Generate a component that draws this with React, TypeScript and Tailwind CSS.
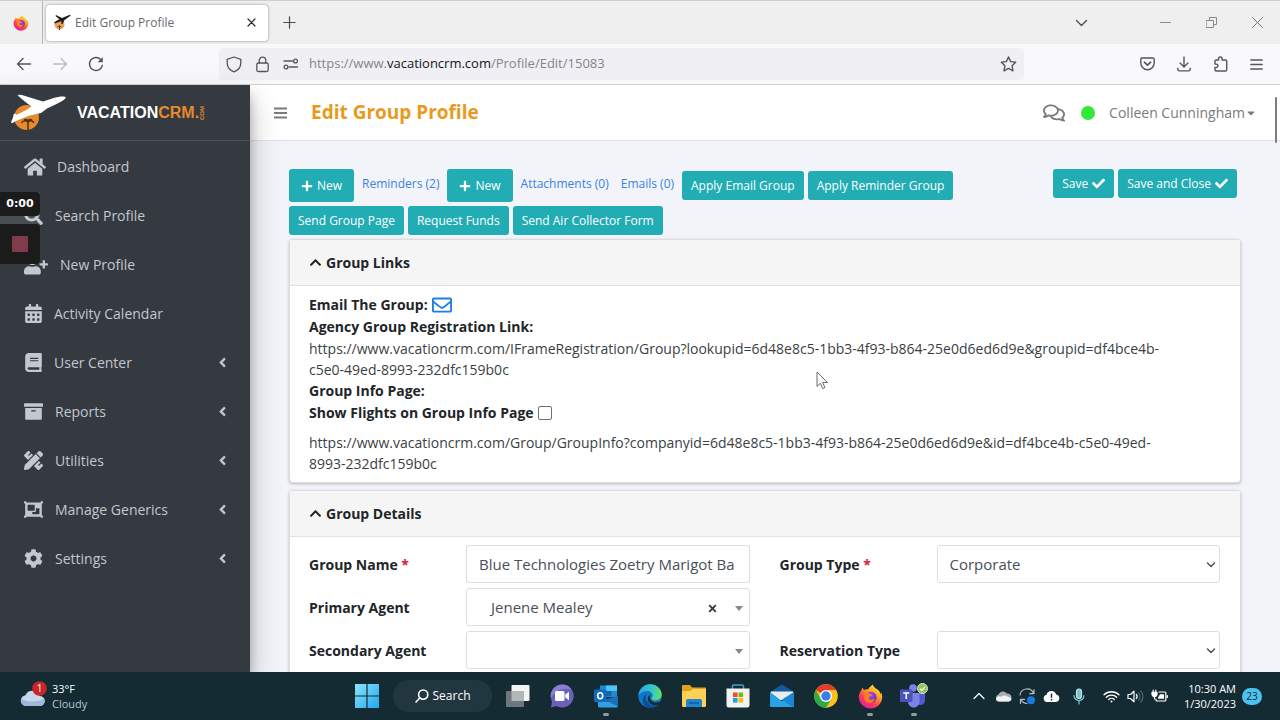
import type { ReactNode } from "react";
import {
  FaAngleLeft,
  FaArchive,
  FaBook,
  FaCalendarAlt,
  FaCaretDown,
  FaCheck,
  FaChevronUp,
  FaCog,
  FaHome,
  FaObjectGroup,
  FaPencilRuler,
  FaPlus,
  FaRegComments,
  FaRegEnvelope,
  FaSearch,
  FaUserPlus,
} from "react-icons/fa";

const line = {
  fill: "none",
  stroke: "currentColor",
  strokeLinecap: "round",
  strokeLinejoin: "round",
} as const;

/* ---------- shared drawings ---------- */

function FirefoxLogo({ size, id }: { size: number; id: string }) {
  return (
    <svg width={size} height={size} viewBox="0 0 24 24" aria-hidden="true">
      <defs>
        <linearGradient id={`${id}-body`} x1="0.8" y1="0.1" x2="0.25" y2="0.95">
          <stop offset="0" stopColor="#ffe23a" />
          <stop offset="0.35" stopColor="#ff9a1f" />
          <stop offset="0.65" stopColor="#ff4052" />
          <stop offset="1" stopColor="#e0209c" />
        </linearGradient>
        <radialGradient id={`${id}-globe`} cx="0.5" cy="0.3" r="0.7">
          <stop offset="0" stopColor="#a54cf0" />
          <stop offset="1" stopColor="#5b2bb8" />
        </radialGradient>
      </defs>
      <path
        d="M3.2 6.2C3.4 4.9 4 3.9 4.6 3.3c.1 1 .5 1.800 1.200 2.500C7 5.200 8.300 5 9.500 5.200 11 2.900 13 1.800 14 .5c.6 1.500 1.600 2.700 3 3.900 2 .3 4 3 4.700 5.100.3-.3.400-.8.400-1.300C23 10 23.300 11.500 23.200 13.200 22.700 19 18 23.500 12 23.500S1 18.800.8 12.700C.7 10.200 1.700 7.700 3.200 6.200Z"
        fill={`url(#${id}-body)`}
      />
      <circle cx="12.400" cy="12.800" r="5.400" fill={`url(#${id}-globe)`} />
      <path
        d="M5.500 8.600c2.600-1 4.800-.5 6.500 1 .9.100 1.600.500 1.800 1.100-.9.800-2.400.9-3.200 1.900-.4 1.500.8 2.500 2.300 2.500 1.600 0 2.800-1 3.200-1.100-.4 2.900-2.700 4.500-5.200 4.300-3.500-.3-5.900-3.200-5.400-9.700Z"
        fill="#ff7a26"
      />
    </svg>
  );
}

function PlaneLogo() {
  return (
    <svg width="56" height="37" viewBox="0 0 56 37" aria-hidden="true">
      <circle cx="15.500" cy="23.500" r="12.500" fill="#e8892b" />
      <path
        d="M17 36V28M10.500 29c1.500-2.600 4.500-2.800 6.500-.8 1.500-2 4.500-1.800 6 .6M13 26.500c1.200-1.500 3-1.200 4 .5 1-1.700 2.800-2 4-.5"
        fill="none"
        stroke="#4a3320"
        strokeWidth="1.500"
      />
      <path
        d="M6.500 1.200c2-.6 4-.4 6 .2L32 7.500 42 4.300C46 3 50 2.400 52.500 2.600c2 .1 2.600.9 2 1.700C53 6.300 49 8.500 45 10.300l-9 4.200-6 4.500c-4 1.200-9 1.500-14 3.500C11 24.500 6 26 1.500 29c-.8.200-1.500-.4-1.300-1.200L2 23.500l.6-3.300c1.200-.8 2.200 0 2.600.8C10.500 18.500 16.500 15.500 20.500 12.500 16 9 11 5.500 6.500 1.200Z"
        fill="#ffffff"
      />
    </svg>
  );
}

/* ---------- browser chrome ---------- */

function TabStrip() {
  return (
    <div className="flex h-[44px] shrink-0 items-center border-t border-[#cfcfd0] bg-[#efeff0] text-[#4a4a4f]">
      <div className="flex h-full w-[43px] items-center justify-center border-r border-[#b5b5b7]">
        <FirefoxLogo size={16} id="fx-tab" />
      </div>
      <div className="ml-[3px] flex h-[36px] w-[222px] items-center rounded bg-white pl-2 pr-3 shadow-[0_0_3px_rgba(0,0,0,0.4)]">
        <svg width="17" height="17" viewBox="0 0 17 17" aria-hidden="true">
          <circle cx="5.500" cy="10.500" r="5" fill="#e9a15a" />
          <path d="M2 1l6 3 8-3.200c1 .2.600 1-.2 1.500L10.500 6 8.500 10H7.500l-.2-3L1 9.500 0 8.500l5.500-3.300L1.500 2Z" fill="#1b1b1b" />
          <path d="M5.500 16v-4M3.500 13l2-1.200L7.500 13" fill="none" stroke="#5b3a1a" />
        </svg>
        <span className="ml-1 flex-1 text-[12px] text-[#68686d]">Edit Group Profile</span>
        <button type="button" aria-label="Close tab" className="text-[#2b2a33]">
          <svg width="9" height="9" viewBox="0 0 9 9" {...line} strokeWidth="1.200">
            <path d="M1 1l7 7M8 1L1 8" />
          </svg>
        </button>
      </div>
      <button type="button" aria-label="New tab" className="ml-[15px]">
        <svg width="13" height="13" viewBox="0 0 13 13" {...line} strokeWidth="1.200">
          <path d="M6.500 .8v11.400M.8 6.500h11.400" />
        </svg>
      </button>
      <div className="ml-auto flex items-center pr-[17px]">
        <button type="button" aria-label="List all tabs" className="mr-[72px]">
          <svg width="13" height="8" viewBox="0 0 13 8" {...line} strokeWidth="1.300">
            <path d="M1.500 1.500l5 5 5-5" />
          </svg>
        </button>
        <button type="button" aria-label="Minimize" className="mr-[35px] text-[#8a8a8e]">
          <svg width="11" height="11" viewBox="0 0 11 11" {...line}>
            <path d="M.5 5.500h10" />
          </svg>
        </button>
        <button type="button" aria-label="Restore" className="mr-[35px] text-[#88888c]">
          <svg width="11" height="11" viewBox="0 0 11 11" {...line}>
            <path d="M.5 3.500h7v7h-7zM3.500 3.500v-3h7v7h-3" />
          </svg>
        </button>
        <button type="button" aria-label="Close" className="text-[#77777b]">
          <svg width="11" height="11" viewBox="0 0 11 11" {...line}>
            <path d="M.5 .5l10 10M10.500 .5l-10 10" />
          </svg>
        </button>
      </div>
    </div>
  );
}

function AddressBar() {
  return (
    <div className="flex h-[41px] shrink-0 items-center border-b border-[#d4d4d8] bg-[#f9f9fb] text-[#55555b]">
      <button type="button" aria-label="Back" className="ml-4">
        <svg width="16" height="14" viewBox="0 0 16 14" {...line} strokeWidth="1.400">
          <path d="M14.500 7H1.500M7 1.500L1.500 7 7 12.500" />
        </svg>
      </button>
      <button type="button" aria-label="Forward" className="ml-5 text-[#bcbcc0]">
        <svg width="16" height="14" viewBox="0 0 16 14" {...line} strokeWidth="1.400">
          <path d="M1.500 7h13M9 1.500L14.500 7 9 12.500" />
        </svg>
      </button>
      <button type="button" aria-label="Reload" className="ml-5">
        <svg width="16" height="16" viewBox="0 0 16 16" {...line} strokeWidth="1.400">
          <path d="M14.300 9.500A6.500 6.500 0 1 1 12.600 3.400" />
          <path d="M14.800 1v5.200H9.600Z" fill="currentColor" stroke="none" />
        </svg>
      </button>
      <div className="ml-[115px] mr-[116px] flex h-[32px] min-w-0 flex-1 items-center rounded bg-[#f0f0f4] px-[7px]">
        <svg width="16" height="17" viewBox="0 0 16 17" {...line} strokeWidth="1.300">
          <path d="M8 1l6.800 2.300v3.500c0 4-2.300 7.500-6.800 9-4.500-1.500-6.800-5-6.800-9V3.300Z" />
        </svg>
        <svg className="ml-[14px]" width="13" height="17" viewBox="0 0 13 17" {...line} strokeWidth="1.300">
          <rect x=".8" y="7" width="11.400" height="8.500" rx="1.500" />
          <path d="M3.200 7V4.500a3.300 3.300 0 0 1 6.600 0V7" />
        </svg>
        <svg className="ml-[14px]" width="16" height="12" viewBox="0 0 16 12" {...line} strokeWidth="1.300">
          <path d="M1 3h8.500M6 9h8.500" />
          <circle cx="12.500" cy="3" r="1.900" />
          <circle cx="3" cy="9" r="1.900" />
        </svg>
        <div role="textbox" aria-label="Address" className="ml-[10px] flex-1 truncate text-[13px] text-[#85858a]">
          https://www.<span className="text-[#15141a]">vacationcrm.com</span>/Profile/Edit/15083
        </div>
        <button type="button" aria-label="Bookmark this page">
          <svg width="17" height="16" viewBox="0 0 17 16" {...line} strokeWidth="1.400">
            <path d="M8.500 1l2.200 4.600 5 .7-3.600 3.500.9 5-4.500-2.400L4 14.800l.9-5L1.300 6.300l5-.7Z" />
          </svg>
        </button>
      </div>
      <div className="flex items-center gap-[22px] pr-[17px]">
        <svg width="15" height="14" viewBox="0 0 15 14" {...line} strokeWidth="1.400">
          <path d="M2 1h11a1.200 1.200 0 0 1 1.200 1.200V6a6.700 6.700 0 0 1-13.400 0V2.200A1.200 1.200 0 0 1 2 1Z" />
          <path d="M4.300 5.200l3.200 3 3.200-3" strokeWidth="1.600" />
        </svg>
        <svg width="14" height="16" viewBox="0 0 14 16" {...line} strokeWidth="1.400">
          <path d="M7 1v10M3 7l4 4 4-4M.8 12.200v1c0 1 .7 1.700 1.700 1.700h9c1 0 1.700-.7 1.700-1.700v-1" />
        </svg>
        <svg width="15" height="16" viewBox="0 0 15 16" {...line} strokeWidth="1.400">
          <path d="M5.500 4V2.800a1.800 1.800 0 0 1 3.600 0V4h3.400c.7 0 1.200.5 1.200 1.200v8.600c0 .7-.5 1.200-1.200 1.200H3.200c-.7 0-1.200-.5-1.200-1.200v-2.300h1.200a1.700 1.700 0 0 0 0-3.400H2V5.200C2 4.500 2.500 4 3.200 4Z" />
        </svg>
        <svg width="13" height="11" viewBox="0 0 13 11" {...line} strokeWidth="1.400">
          <path d="M.8 1h11.400M.8 5.500h11.400M.8 10h11.400" />
        </svg>
      </div>
    </div>
  );
}

/* ---------- application ---------- */

const navItems = [
  { label: "Dashboard", icon: <FaHome size={22} />, gap: "gap-[11px]", expands: false },
  { label: "Search Profile", icon: <FaSearch size={19} />, gap: "gap-3", expands: false },
  { label: "New Profile", icon: <FaUserPlus size={24} />, gap: "gap-3", expands: false },
  { label: "Activity Calendar", icon: <FaCalendarAlt size={19} />, gap: "gap-[11px]", expands: false },
  { label: "User Center", icon: <FaBook size={19} />, gap: "gap-[11px]", expands: true },
  { label: "Reports", icon: <FaArchive size={19} />, gap: "gap-3", expands: true },
  { label: "Utilities", icon: <FaPencilRuler size={19} />, gap: "gap-3", expands: true },
  { label: "Manage Generics", icon: <FaObjectGroup size={19} />, gap: "gap-3", expands: true },
  { label: "Settings", icon: <FaCog size={19} />, gap: "gap-3", expands: true },
];

function Sidebar() {
  return (
    <aside className="z-10 flex w-[250px] shrink-0 flex-col bg-[#343a40] shadow-[0_14px_28px_rgba(0,0,0,0.25),0_10px_10px_rgba(0,0,0,0.22)]">
      <a href="#home" className="flex h-[56px] shrink-0 items-center border-b border-[#4b545c] pl-[11px]">
        <PlaneLogo />
        <span className="ml-[10px] flex items-center font-['Liberation_Sans',sans-serif] text-[16px] font-bold text-white">
          VACATION<span className="text-[#e8892b]">CRM.</span>
          <span className="rotate-180 text-[6px] leading-[6px] text-[#e8892b] [writing-mode:vertical-rl]">COM</span>
        </span>
      </a>
      <nav className="flex flex-col pt-px">
        {navItems.map((item) => (
          <a
            key={item.label}
            href="#nav"
            className={`flex h-[49px] items-center pl-6 pr-5 text-[14px] text-[#c2c7d0] ${item.gap}`}
          >
            {item.icon}
            <span className="flex-1">{item.label}</span>
            {item.expands && <FaAngleLeft size={15} />}
          </a>
        ))}
      </nav>
    </aside>
  );
}

function TopBar() {
  return (
    <header className="flex h-[56px] shrink-0 items-center border-b border-[#dee2e6] bg-white pl-6 pr-[23px] text-[#7b7b7b]">
      <button type="button" aria-label="Toggle menu">
        <svg width="13" height="12" viewBox="0 0 13 12" {...line} strokeLinecap="butt" strokeWidth="1.800">
          <path d="M0 1.500h13M0 6h13M0 10.500h13" />
        </svg>
      </button>
      <h1 className="ml-6 text-[19px] font-bold text-[#e99a1c]">Edit Group Profile</h1>
      <div className="ml-auto flex items-center">
        <FaRegComments size={22} />
        <span className="ml-4 h-[14px] w-[14px] rounded-full bg-[#35e835]" />
        <button type="button" className="ml-[14px] flex items-center text-[14px]">
          Colleen Cunningham
          <FaCaretDown size={12} />
        </button>
      </div>
    </header>
  );
}

function ActionButton({ children, tall }: { children: ReactNode; tall?: boolean }) {
  return (
    <button
      type="button"
      className={`flex items-center gap-1 whitespace-nowrap rounded-[3px] bg-[#22adb5] text-[12px] text-white ${
        tall ? "h-[33px] px-3" : "h-[29px] px-[9px]"
      }`}
    >
      {children}
    </button>
  );
}

function Toolbar() {
  return (
    <div className="flex items-start justify-between pr-1">
      <div className="flex flex-col gap-1">
        <div className="flex items-center text-[12px] text-[#3b82e0]">
          <ActionButton tall>
            <FaPlus size={12} /> New
          </ActionButton>
          <a href="#reminders" className="mx-2 pb-1">
            Reminders (2)
          </a>
          <ActionButton tall>
            <FaPlus size={12} /> New
          </ActionButton>
          <a href="#attachments" className="ml-2 mr-3 pb-1">
            Attachments (0)
          </a>
          <a href="#emails" className="mr-2 pb-1">
            Emails (0)
          </a>
          <div className="flex gap-1">
            <ActionButton>Apply Email Group</ActionButton>
            <ActionButton>Apply Reminder Group</ActionButton>
          </div>
        </div>
        <div className="flex gap-1">
          <ActionButton>Send Group Page</ActionButton>
          <ActionButton>Request Funds</ActionButton>
          <ActionButton>Send Air Collector Form</ActionButton>
        </div>
      </div>
      <div className="flex gap-1">
        <ActionButton>
          Save <FaCheck size={13} />
        </ActionButton>
        <ActionButton>
          Save and Close <FaCheck size={13} />
        </ActionButton>
      </div>
    </div>
  );
}

function Card({ title, children }: { title: string; children: ReactNode }) {
  return (
    <section className="rounded border border-[#dcdde0] bg-white shadow-[0_1px_3px_rgba(0,0,0,0.25)]">
      <h2 className="border-b border-[#e2e2e4] bg-[#f5f5f5]">
        <button type="button" className="flex h-[45px] w-full items-center gap-1 px-[19px] text-[14px] font-bold">
          <FaChevronUp size={13} />
          {title}
        </button>
      </h2>
      {children}
    </section>
  );
}

function GroupLinks() {
  return (
    <Card title="Group Links">
      <div className="px-[19px] py-2 text-[14px] leading-[22px]">
        <p className="flex items-center gap-1 font-bold">
          Email The Group:
          <a href="#email" aria-label="Email the group" className="text-[#1f7fe0]">
            <FaRegEnvelope size={20} />
          </a>
        </p>
        <p className="font-bold">Agency Group Registration Link:</p>
        <p className="max-w-[860px] leading-[21px] text-[#3a3f44]">
          https://www.vacationcrm.com/IFrameRegistration/Group?lookupid=6d48e8c5-1bb3-4f93-b864-25e0d6ed6d9e&amp;groupid=df4bce4b-c5e0-49ed-8993-232dfc159b0c
        </p>
        <p className="font-bold">Group Info Page:</p>
        <p className="mb-2 flex items-center gap-1 font-bold">
          <label htmlFor="show-flights">Show Flights on Group Info Page</label>
          <input
            id="show-flights"
            type="checkbox"
            className="h-[14px] w-[14px] appearance-none rounded-[2px] border border-[#6f6f76] bg-white"
          />
        </p>
        <p className="max-w-[860px] leading-[21px] text-[#3a3f44]">
          https://www.vacationcrm.com/Group/GroupInfo?companyid=6d48e8c5-1bb3-4f93-b864-25e0d6ed6d9e&amp;id=df4bce4b-c5e0-49ed-8993-232dfc159b0c
        </p>
      </div>
    </Card>
  );
}

function Field({
  id,
  label,
  required,
  children,
}: {
  id: string;
  label: string;
  required?: boolean;
  children: ReactNode;
}) {
  return (
    <div className="grid grid-cols-[157px_1fr] items-center">
      <label htmlFor={id} className="text-[14px] font-bold">
        {label} {required && <span className="text-[#d9153a]">*</span>}
      </label>
      <div className="relative">{children}</div>
    </div>
  );
}

function Chevron() {
  return (
    <svg
      className="pointer-events-none absolute right-1 top-4 text-[#505458]"
      width="10"
      height="8"
      viewBox="0 0 10 8"
      {...line}
      strokeWidth="1.500"
    >
      <path d="M1.500 2L5 5.500 8.500 2" />
    </svg>
  );
}

function Caret() {
  return (
    <svg className="pointer-events-none absolute right-[7px] top-[18px]" width="8" height="5" viewBox="0 0 8 5">
      <path d="M0 0h8L4 5Z" fill="#888" />
    </svg>
  );
}

const control =
  "block h-[38px] w-full appearance-none rounded-[3px] border border-[#dcdfe3] bg-white px-3 text-[15px] text-[#495057]";

function GroupDetails() {
  return (
    <Card title="Group Details">
      <div className="grid grid-cols-2 gap-x-[30px] gap-y-[5px] py-2 pl-[19px] pr-5">
        <Field id="group-name" label="Group Name" required>
          <input id="group-name" className={control} defaultValue="Blue Technologies Zoetry Marigot Ba" />
        </Field>
        <Field id="group-type" label="Group Type" required>
          <select id="group-type" className={control}>
            <option>Corporate</option>
          </select>
          <Chevron />
        </Field>
        <Field id="primary-agent" label="Primary Agent">
          <select id="primary-agent" className={`${control} indent-3`}>
            <option>Jenene Mealey</option>
          </select>
          <button
            type="button"
            aria-label="Clear primary agent"
            className="absolute right-[33px] top-4 text-[#333]"
          >
            <svg width="9" height="9" viewBox="0 0 9 9" {...line} strokeLinecap="butt" strokeWidth="1.700">
              <path d="M1.200 1.200l6.600 6.600M7.800 1.200L1.200 7.800" />
            </svg>
          </button>
          <Caret />
        </Field>
        <div />
        <Field id="secondary-agent" label="Secondary Agent">
          <select id="secondary-agent" className={control} />
          <Caret />
        </Field>
        <Field id="reservation-type" label="Reservation Type">
          <select id="reservation-type" className={control} />
          <Chevron />
        </Field>
      </div>
    </Card>
  );
}

/* ---------- desktop ---------- */

function RecorderWidget() {
  return (
    <div className="absolute left-0 top-[192px] z-20 flex w-[40px] flex-col gap-2 bg-white/10">
      <span className="flex h-[24px] items-center justify-center rounded-r bg-[#1b1b1c] pt-px font-['DejaVu_Sans',sans-serif] text-[11px] font-bold text-white">
        0:00
      </span>
      <button
        type="button"
        aria-label="Stop recording"
        className="flex h-[40px] items-center justify-center rounded-r bg-[#1b1b1c]"
      >
        <span className="h-4 w-4 rounded-[1px] bg-[#823b4b]" />
      </button>
    </div>
  );
}

function TaskIcon({ label, running, children }: { label: string; running?: boolean; children: ReactNode }) {
  return (
    <button type="button" aria-label={label} className="relative flex h-[48px] w-[44px] items-center justify-center">
      {children}
      {running && <span className="absolute bottom-1 h-[3px] w-[6px] rounded-full bg-[#8e9ca3]" />}
    </button>
  );
}

function TaskIcons() {
  return (
    <div className="flex items-center pl-px">
      <TaskIcon label="Start">
        <svg width="24" height="24" viewBox="0 0 24 24">
          <defs>
            <linearGradient id="win" x1="0" y1="0" x2="1" y2="1">
              <stop offset="0" stopColor="#8fe4fb" />
              <stop offset="1" stopColor="#1ea7ee" />
            </linearGradient>
          </defs>
          <path d="M0 0h11.400v11.400H0zM12.600 0H24v11.400H12.600zM0 12.600h11.400V24H0zM12.600 12.600H24V24H12.600z" fill="url(#win)" />
        </svg>
      </TaskIcon>
      <button
        type="button"
        className="mx-1 flex h-[32px] w-[99px] items-center justify-center gap-1 rounded-full bg-[#22363f] text-[12px] text-white"
      >
        <svg width="14" height="14" viewBox="0 0 14 14" {...line} strokeWidth="1.600">
          <circle cx="8.200" cy="5.600" r="4.600" />
          <path d="M4.800 9L1 13" />
        </svg>
        Search
      </button>
      <TaskIcon label="Task view">
        <svg width="24" height="22" viewBox="0 0 24 22">
          <rect x="5.500" width="18" height="16" rx="1" fill="#f3f4f5" />
          <rect y="6" width="18" height="16" rx="1" fill="#6f777c" />
          <path d="M5.500 6H18v10H5.500z" fill="#b4b7b9" />
        </svg>
      </TaskIcon>
      <TaskIcon label="Chat">
        <svg width="24" height="24" viewBox="0 0 24 24">
          <path d="M12 .5A11.500 11.500 0 1 1 6.500 22L1 23.500 2 17.500A11.500 11.500 0 0 1 12 .5Z" fill="#6a60bd" />
          <path d="M12 .5A11.500 11.500 0 0 0 .9 14C5 6 14 3 21.500 5.500A11.500 11.500 0 0 0 12 .5Z" fill="#8a7fd3" />
          <rect x="5" y="7" width="9.500" height="10" rx="1.600" fill="#fff" />
          <path d="M15.300 10.500L19 7.800v8.400l-3.700-2.700Z" fill="#fff" />
        </svg>
      </TaskIcon>
      <TaskIcon label="Outlook" running>
        <svg width="24" height="24" viewBox="0 0 24 24">
          <path d="M6 1.500h17V13H6z" fill="#1d8bd8" />
          <path d="M12 1.500h11V7H12z" fill="#50c4f2" />
          <path d="M12 7h5.500v5H12z" fill="#1565a8" />
          <path d="M4 12l10 6 10-6v10a1.500 1.500 0 0 1-1.500 1.500h-17A1.500 1.500 0 0 1 4 22Z" fill="#2f9fe6" />
          <path d="M24 12v10.500L10 15.500Z" fill="#1b6fb5" />
          <rect y="5.500" width="12.500" height="12.500" rx="1.200" fill="#0f6cbd" />
          <ellipse cx="6.200" cy="11.700" rx="2.500" ry="3" fill="none" stroke="#fff" strokeWidth="1.600" />
        </svg>
      </TaskIcon>
      <TaskIcon label="Edge">
        <svg width="24" height="24" viewBox="0 0 24 24">
          <defs>
            <linearGradient id="edge-top" x1="0" y1="0.4" x2="1" y2="0.5">
              <stop offset="0" stopColor="#2aa6e2" />
              <stop offset="0.6" stopColor="#35c8c4" />
              <stop offset="1" stopColor="#67e05a" />
            </linearGradient>
          </defs>
          <circle cx="12" cy="12" r="11.700" fill="#1276c8" />
          <path d="M.4 11C1.500 4.500 6.500.3 12 .3c7 0 11.700 5 11.700 10.200 0 3.500-2.800 5.900-6.200 5.900-2.600 0-4.200-.8-4.200-1.800 0-.8 1.400-1.300 1.400-3.300 0-2.300-2.300-4.300-5.500-4.300C5.500 7 2 9 .4 11Z" fill="url(#edge-top)" />
          <path d="M9.300 9.500C6.500 12 7.500 19 13.500 21c3 1 6.500.2 8.700-2-3 5-9.500 6-14 3.500C3 19.500 4 11.500 9.300 9.500Z" fill="#0b4f96" />
          <path d="M12.600 10.500c-2 3.300.4 7.700 5.400 8 2 .1 4.400-.8 5.600-2 .6-1 .4 3-1 3.200-2 1.500-5 2-8.100 1C9 19 8.200 13 12.600 10.500Z" fill="#142b33" />
        </svg>
      </TaskIcon>
      <TaskIcon label="File Explorer">
        <svg width="24" height="22" viewBox="0 0 24 22">
          <path d="M0 1.200C0 .5.500 0 1.200 0h6.600l2.400 2.500H23c.6 0 1 .4 1 1V9H0Z" fill="#e0a21b" />
          <path d="M0 6h8.500l2.300-2H24v16.800c0 .7-.5 1.200-1.200 1.200H1.200C.5 22 0 21.500 0 20.800Z" fill="#fbd257" />
          <path d="M4 22v-6c0-1.200.8-2 2-2h12c1.200 0 2 .8 2 2v6Z" fill="#1c87d0" />
          <path d="M7 18h10" stroke="#0d5c9c" strokeWidth="1.500" />
        </svg>
      </TaskIcon>
      <TaskIcon label="Microsoft Store">
        <svg width="24" height="24" viewBox="0 0 24 24">
          <path d="M6.500 6V2.200C6.500 1.500 7 1 7.700 1h8.600c.7 0 1.200.5 1.200 1.200V6" fill="none" stroke="#3aa5c4" strokeWidth="1.400" />
          <path d="M.5 4.500h23V21a2.500 2.500 0 0 1-2.500 2.500H3A2.500 2.500 0 0 1 .5 21Z" fill="#f2f2f2" />
          <path d="M7 8.500h4.600v4.600H7z" fill="#f04e23" />
          <path d="M12.500 8.500h4.600v4.600h-4.600z" fill="#7db700" />
          <path d="M7 14h4.600v4.600H7z" fill="#1a9fe8" />
          <path d="M12.500 14h4.600v4.600h-4.600z" fill="#fdb813" />
        </svg>
      </TaskIcon>
      <TaskIcon label="Mail">
        <svg width="24" height="24" viewBox="0 0 24 24">
          <path d="M0 8L12 .5 24 8v6H0Z" fill="#11599b" />
          <path d="M1 7.500h22V16H1z" fill="#e9edf0" />
          <path d="M0 8l12 9L24 8v13.500c0 1-.7 1.500-1.500 1.500h-21C.7 23 0 22.500 0 21.500Z" fill="#2aa0e6" />
          <path d="M24 8v13.500c0 1-.7 1.500-1.500 1.500L12 15.500Z" fill="#1b86d4" />
        </svg>
      </TaskIcon>
      <TaskIcon label="Chrome">
        <svg width="24" height="24" viewBox="0 0 24 24">
          <circle cx="12" cy="12" r="11.800" fill="#fbc116" />
          <path d="M12 12L1.800 6A11.800 11.800 0 0 1 22.200 6H12Z" fill="#e33b2e" />
          <path d="M12 12L6.800 15 1.800 6A11.800 11.800 0 0 0 12 23.800L17.200 15Z" fill="#2da94f" />
          <circle cx="12" cy="12" r="6" fill="#fff" />
          <circle cx="12" cy="12" r="4.700" fill="#3b7ded" />
        </svg>
      </TaskIcon>
      <TaskIcon label="Firefox" running>
        <FirefoxLogo size={25} id="fx-task" />
      </TaskIcon>
      <TaskIcon label="Teams" running>
        <svg width="28" height="26" viewBox="0 0 28 26">
          <circle cx="13" cy="5" r="3.800" fill="#7b83eb" />
          <path d="M17 10h8v7c0 3-2 5-4.500 5S17 20 17 18Z" fill="#5059c9" />
          <path d="M8 10h11.500v8.500c0 3.500-2.500 6-5.700 6S8 22 8 18.500Z" fill="#7b83eb" />
          <rect y="6.500" width="12.500" height="12.500" rx="1.200" fill="#4b53bc" />
          <path d="M3.300 10h6M6.300 10v6" stroke="#fff" strokeWidth="1.500" />
          <circle cx="22.500" cy="5.500" r="5" fill="#92c353" stroke="#fff" strokeWidth=".8" />
          <path d="M20 5.700l1.800 1.800L25 4" fill="none" stroke="#fff" strokeWidth="1.200" />
        </svg>
      </TaskIcon>
    </div>
  );
}

function Tray() {
  return (
    <div className="ml-auto flex items-center pr-[18px] text-white">
      <svg width="12" height="8" viewBox="0 0 12 8" {...line} strokeWidth="1.200">
        <path d="M1 6.500l5-5 5 5" />
      </svg>
      <svg className="ml-[10px]" width="17" height="12" viewBox="0 0 17 12">
        <path d="M4 11.500a3.600 3.600 0 0 1-.5-7A5 5 0 0 1 12 3.500c3 0 4.500 2 4.500 4s-1.500 4-3.700 4Z" fill="#a8adb0" />
        <path d="M4 11.500C1 11.500.4 8.500 2 7c1.200-1.200 3-1 4-.2C8 5 11 5 13 7c2-.3 3.500 1 3.400 2.300 0 1.300-1.300 2.200-3 2.200Z" fill="#f1f1f1" />
      </svg>
      <svg className="ml-[7px]" width="17" height="17" viewBox="0 0 17 17" {...line} strokeWidth="1.200">
        <path d="M1 7A7 7 0 0 1 14.500 5.500M15 1.500v4.200h-4.200M1.500 15.500v-4.200h4.200M2 11.500a7 7 0 0 0 6 4" stroke="#b3bcc0" />
        <circle cx="12" cy="12.300" r="4" fill="#1a7be0" stroke="none" />
      </svg>
      <svg className="ml-[7px]" width="17" height="13" viewBox="0 0 17 13">
        <path d="M4 12a3.700 3.700 0 0 1-.4-7.300 5 5 0 0 1 9.600-.2A3.800 3.800 0 0 1 13 12Z" fill="#fff" />
        <path d="M8.500 3.500v4.200M8.500 9v1.400" stroke="#142b33" strokeWidth="1.400" />
      </svg>
      <svg className="ml-[13px]" width="12" height="17" viewBox="0 0 12 17" {...line} strokeWidth="1.200">
        <rect x="3.500" y="1" width="5" height="9.500" rx="2.500" fill="#7cc0c9" stroke="#bfe9ee" />
        <path d="M1 7.500a5 5 0 0 0 10 0M6 12.700V16" stroke="#7fd0db" />
      </svg>
      <svg className="ml-[18px]" width="17" height="13" viewBox="0 0 17 13" {...line} strokeWidth="1.300">
        <path d="M1 4.800a10.700 10.700 0 0 1 15 0M3.300 7.200a7.400 7.400 0 0 1 10.400 0M5.700 9.500a4 4 0 0 1 5.600 0" />
        <circle cx="8.500" cy="11.500" r="1" fill="currentColor" stroke="none" />
      </svg>
      <svg className="ml-[7px]" width="17" height="13" viewBox="0 0 17 13" {...line} strokeWidth="1.200">
        <path d="M1 4.500h2.500L7 1.200v10.600L3.500 8.500H1ZM9.300 4.500a3 3 0 0 1 0 4" />
        <path d="M11.500 2.800a5.500 5.500 0 0 1 0 7.400M13.800 1a8 8 0 0 1 0 11" stroke="#566870" />
      </svg>
      <svg className="ml-[7px]" width="17" height="14" viewBox="0 0 17 14" {...line} strokeWidth="1.200">
        <path d="M8 3h5.800c.6 0 1 .4 1 1v7c0 .6-.4 1-1 1H6c-.6 0-1-.4-1-1v-1M16.300 6.500v2" />
        <path d="M9 5.200h4v4.600H7V8.500Z" fill="currentColor" stroke="none" />
        <path d="M1 3.300h5v1.700a2.500 2.500 0 0 1-5 0ZM2.200 1v2M4.800 1v2M3.500 7.500V10" fill="currentColor" />
      </svg>
      <div className="ml-4 text-right text-[11px] leading-[15px]">
        <div>10:30 AM</div>
        <div>1/30/2023</div>
      </div>
      <span className="ml-[6px] flex h-[17px] w-[20px] items-center justify-center rounded-full bg-[#4cc2f1] text-[10px] text-[#142b33]">
        23
      </span>
    </div>
  );
}

function Taskbar() {
  return (
    <footer className="relative z-20 grid h-[48px] shrink-0 grid-cols-[1fr_auto_1fr] items-center bg-[#142b33]">
      <div className="flex items-center gap-[5px] pb-1 pl-5 text-[11px] leading-[15px] text-white">
        <svg width="27" height="27" viewBox="0 0 27 27">
          <path d="M6 25a5.400 5.400 0 0 1-.5-10.700A7.500 7.500 0 0 1 19.500 15 5 5 0 0 1 20 25Z" fill="#c7d6ea" />
          <path d="M6 25a5.400 5.400 0 0 1-4.800-7.500C5 21 15 22 24.500 18 25.500 22 23 25 20 25Z" fill="#9fb7d8" />
          <circle cx="19.500" cy="7.500" r="7.300" fill="#c9252b" />
          <text x="19.500" y="11" fontSize="10" textAnchor="middle" fill="#fff">
            1
          </text>
        </svg>
        <div className="pt-1">
          <div>33°F</div>
          <div className="text-[#b9c4c9]">Cloudy</div>
        </div>
      </div>
      <TaskIcons />
      <Tray />
    </footer>
  );
}

export default function App() {
  return (
    <div className="relative flex h-screen flex-col overflow-hidden bg-[#f2f4f9] font-['Open_Sans','Noto_Sans',sans-serif] text-[#212529]">
      <TabStrip />
      <AddressBar />
      <div className="flex min-h-0 flex-1">
        <Sidebar />
        <div className="relative flex min-w-0 flex-1 flex-col">
          <TopBar />
          <main className="min-h-0 flex-1 overflow-hidden pl-[39px] pr-[39px] pt-7">
            <Toolbar />
            <div className="mt-1 flex flex-col gap-[7px]">
              <GroupLinks />
              <GroupDetails />
            </div>
          </main>
          <span className="absolute right-[3px] top-3 h-[46px] w-[2px] rounded-full bg-[#7d7d80]" />
        </div>
      </div>
      <Taskbar />
      <RecorderWidget />
      <svg className="pointer-events-none absolute left-[816px] top-[371px] z-20" width="13" height="19" viewBox="0 0 13 19">
        <path d="M1 1v14.500l3.400-3.200 2.300 5.300 2.200-1-2.200-5.100h4.800Z" fill="#fff" stroke="#6a6a6a" strokeWidth="1" />
      </svg>
    </div>
  );
}
